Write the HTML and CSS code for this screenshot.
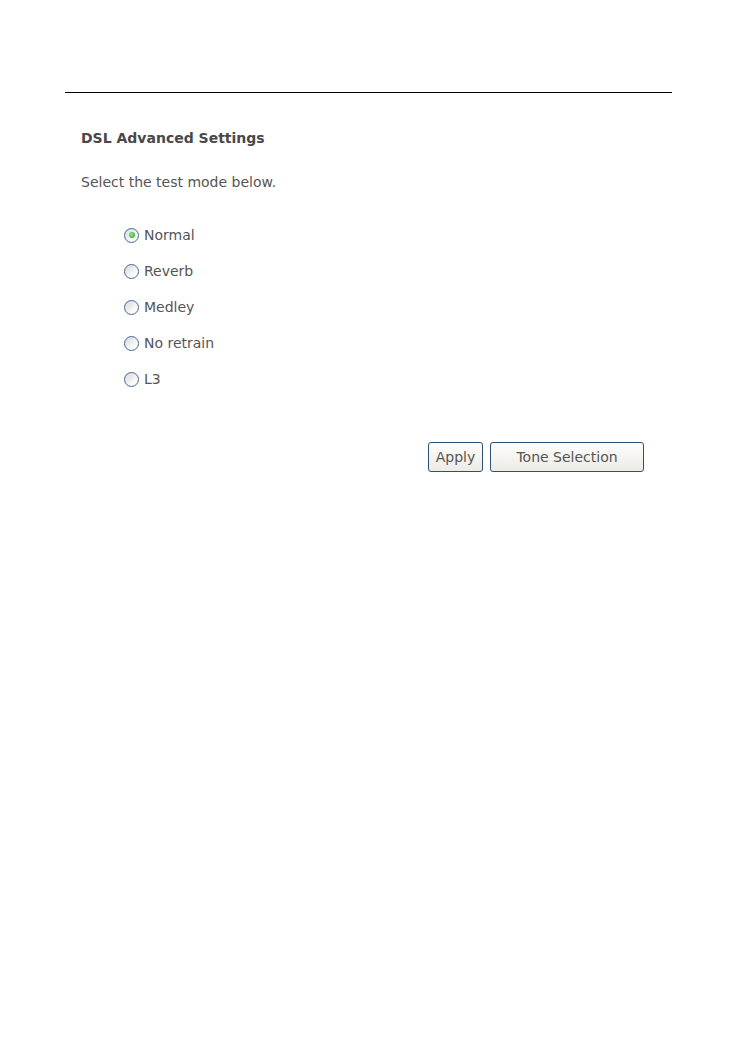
FILE: index.html
```html
<!DOCTYPE html>
<html>
<head>
<meta charset="utf-8">
<link rel="stylesheet" href="styles.css">
</head>
<body>
<div class="page">
  <hr class="rule">
  <div class="content">
    <h1 class="title">DSL Advanced Settings</h1>
    <p class="intro">Select the test mode below.</p>
    <div class="options">
      <label class="opt"><span class="radio"><span class="dot"></span></span>Normal</label>
      <label class="opt"><span class="radio"></span>Reverb</label>
      <label class="opt"><span class="radio"></span>Medley</label>
      <label class="opt"><span class="radio"></span>No retrain</label>
      <label class="opt"><span class="radio"></span>L3</label>
    </div>
    <div class="actions">
      <button class="btn btn-apply">Apply</button>
      <button class="btn btn-tone">Tone Selection</button>
    </div>
  </div>
</div>
</body>
</html>
```
FILE: styles.css
```css
html, body {
  margin: 0;
  padding: 0;
  background: #fff;
}
body {
  font-family: "DejaVu Sans", Verdana, sans-serif;
  color: #555;
}
.page {
  padding: 92px 67px 0 65px;
}
.rule {
  margin: 0;
  border: 0;
  height: 1px;
  background: #000;
}
.content {
  padding-left: 16px;
}
.title {
  margin: 35px 0 0;
  font-size: 14px;
  font-weight: bold;
  color: #484848;
  line-height: 20px;
}
.intro {
  margin: 24px 0 0;
  font-size: 14px;
  line-height: 20px;
}
.options {
  margin-top: 33px;
  padding-left: 43px;
  display: flex;
  flex-direction: column;
  gap: 16px;
}
.opt {
  display: flex;
  align-items: center;
  font-size: 14px;
  line-height: 20px;
  height: 20px;
}
.radio {
  width: 15px;
  height: 15px;
  border: 1.5px solid #46698f;
  border-radius: 50%;
  background: linear-gradient(135deg, #d8d8d8, #fafafa 70%);
  margin-right: 5px;
  display: flex;
  align-items: center;
  justify-content: center;
  box-sizing: border-box;
  flex: none;
}
.dot {
  width: 6px;
  height: 6px;
  border-radius: 50%;
  background: radial-gradient(circle at 40% 40%, #8be88b, #26a026);
}
.actions {
  margin-top: 53px;
  display: flex;
  justify-content: flex-end;
  gap: 7px;
  padding-right: 28px;
}
.btn {
  font-family: "DejaVu Sans", Verdana, sans-serif;
  font-size: 14px;
  color: #555;
  height: 30px;
  border: 1px solid #2f4f75;
  border-radius: 3px;
  background: linear-gradient(#fdfdfb, #ecebe6);
  padding: 0;
}
.btn-apply {
  width: 55px;
}
.btn-tone {
  width: 154px;
}
```
